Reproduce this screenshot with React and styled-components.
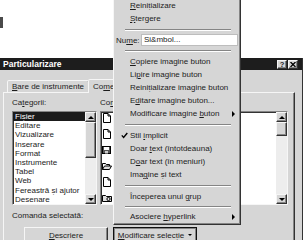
import styled, { createGlobalStyle } from "styled-components";

const FACE = "#d6d6d6";
const HILITE = "#f6f6f6";
const SHADOW = "#858585";
const DARK = "#333333";

const GlobalStyle = createGlobalStyle`
  html, body {
    margin: 0;
    padding: 0;
    background: #ffffff;
  }
  body {
    font-family: "Liberation Sans", Arial, sans-serif;
    font-size: 8px;
    color: #1c1c1c;
  }
`;

const raised = `
  border: 1px solid;
  border-color: ${HILITE} ${DARK} ${DARK} ${HILITE};
  box-shadow: inset -1px -1px ${SHADOW};
`;

const sunken = `
  border: 1px solid;
  border-color: ${SHADOW} ${HILITE} ${HILITE} ${SHADOW};
  box-shadow: inset 1px 1px ${DARK};
`;

const Screen = styled.div`
  position: relative;
  width: 304px;
  height: 240px;
  overflow: hidden;
  background: #fff;
`;

const Backdrop = styled.div`
  height: 58px;
  padding-top: 17px;
  box-sizing: border-box;
`;

const EdgeMark = styled.div`
  width: 3px;
  height: 11px;
  background: #4a4a4a;
`;

const Dialog = styled.div`
  width: 303px;
  height: 200px;
  box-sizing: border-box;
  background: ${FACE};
  border-right: 1px solid ${DARK};
`;

const TitleBar = styled.div`
  height: 12px;
  display: flex;
  align-items: center;
  justify-content: space-between;
  padding: 0 4px 0 3px;
  background: #1d1d1d;
`;

const Title = styled.span`
  color: #fff;
  font-weight: bold;
  font-size: 8.5px;
  line-height: 12px;
`;

const TitleButtons = styled.div`
  display: flex;
  gap: 1px;
`;

const TitleButton = styled.div`
  width: 10px;
  height: 9px;
  box-sizing: border-box;
  ${raised}
  background: ${FACE};
  display: flex;
  align-items: center;
  justify-content: center;
  font-weight: bold;
  font-size: 7.5px;
  line-height: 7px;
`;

const Body = styled.div`
  padding: 10px 0 0 3px;
`;

const TabStrip = styled.div`
  display: flex;
  align-items: flex-end;
  height: 12px;
  padding-left: 4px;
`;

const Tab = styled.div`
  position: relative;
  box-sizing: border-box;
  height: ${(p) => (p.$active ? "14px" : "12px")};
  margin-bottom: ${(p) => (p.$active ? "-1px" : "0")};
  margin-left: ${(p) => (p.$active ? "-1px" : "0")};
  padding: 0 4px;
  display: flex;
  align-items: center;
  background: ${FACE};
  border: 1px solid;
  border-bottom: none;
  border-color: ${HILITE} ${DARK} transparent ${HILITE};
  border-radius: 2px 2px 0 0;
  z-index: ${(p) => (p.$active ? 1 : 0)};
`;

const Panel = styled.div`
  width: 292px;
  height: 170px;
  box-sizing: border-box;
  ${raised}
  padding: 5px 6px 0 8px;
`;

const Columns = styled.div`
  display: grid;
  grid-template-columns: 85px 188px;
  column-gap: 3px;
`;

const Field = styled.div`
  display: flex;
  flex-direction: column;
  gap: 4px;
`;

const FieldLabel = styled.div`
  height: 9px;
  line-height: 9px;
  white-space: nowrap;
`;

const ListBox = styled.div`
  height: 94px;
  box-sizing: border-box;
  ${sunken}
  background: #fff;
  display: flex;
`;

const ListItems = styled.div`
  flex: 1;
  min-width: 0;
  overflow: hidden;
`;

const CategoryRow = styled.div`
  height: 9.2px;
  line-height: 9.2px;
  padding-left: 2px;
  white-space: nowrap;
  background: ${(p) => (p.$selected ? "#1b1b1b" : "transparent")};
  color: ${(p) => (p.$selected ? "#fff" : "inherit")};
`;

const CommandRow = styled.div`
  height: 16px;
  display: flex;
  align-items: flex-start;
  padding: 1px 0 0 1px;
  box-sizing: border-box;
`;

const ScrollBar = styled.div`
  width: 11px;
  display: flex;
  flex-direction: column;
  background: #ededed;
`;

const ScrollButton = styled.div`
  height: ${(p) => p.$h}px;
  box-sizing: border-box;
  ${raised}
  background: ${FACE};
  display: flex;
  align-items: center;
  justify-content: center;
`;

const Arrow = styled.span`
  width: 0;
  height: 0;
  border-left: 3px solid transparent;
  border-right: 3px solid transparent;
  border-${(p) => (p.$down ? "top" : "bottom")}: 3px solid #000;
`;

const ScrollGap = styled.div`
  flex: 1;
`;

const Caption = styled.div`
  margin-top: 6px;
  height: 9px;
  line-height: 9px;
`;

const ButtonRow = styled.div`
  display: flex;
  gap: 5px;
  margin-top: 7px;
  padding-left: 12px;
`;

const PushButton = styled.div`
  width: 84px;
  height: 16px;
  box-sizing: border-box;
  background: ${FACE};
  display: flex;
  align-items: center;
  justify-content: center;
  gap: 4px;
  ${(p) =>
    p.$pressed
      ? `border: 1px solid #111; box-shadow: inset 1px 1px ${SHADOW}, inset -1px -1px ${SHADOW};`
      : raised}
`;

const SmallDown = styled.span`
  width: 0;
  height: 0;
  border-left: 2px solid transparent;
  border-right: 2px solid transparent;
  border-top: 2px solid #000;
`;

const Key = styled.span`
  text-decoration: underline;
  text-underline-offset: 1px;
`;

/* context menu, dropped from "Modificare selecție" */
const Menu = styled.div`
  position: absolute;
  left: 113px;
  top: -4px;
  width: 128px;
  box-sizing: border-box;
  background: ${FACE};
  border: 1px solid;
  border-color: ${HILITE} ${DARK} ${DARK} ${HILITE};
  box-shadow: inset -1px -1px ${SHADOW};
  padding: 2px 2px 1px 2px;
  z-index: 5;
`;

const MenuItem = styled.div`
  position: relative;
  height: 13px;
  display: flex;
  align-items: center;
  padding: 0 3px 0 14px;
  white-space: nowrap;
`;

const Check = styled.svg`
  position: absolute;
  left: 5px;
  top: 3px;
`;

const SubArrow = styled.span`
  margin-left: auto;
  width: 0;
  height: 0;
  border-top: 3px solid transparent;
  border-bottom: 3px solid transparent;
  border-left: 3px solid #000;
`;

const Separator = styled.div`
  height: ${(p) => p.$h || 9}px;
  display: flex;
  align-items: center;
  padding: 0 7px 0 9px;
  &::after {
    content: "";
    flex: 1;
    border-top: 1px solid ${SHADOW};
    border-bottom: 1px solid #fff;
  }
`;

const NameRow = styled.div`
  height: 12px;
  display: flex;
  align-items: center;
`;

const NameLabel = styled.span`
  width: 25px;
`;

const NameInput = styled.div`
  flex: 1;
  height: 12px;
  box-sizing: border-box;
  background: #fff;
  border: 1px solid #bdbdbd;
  padding-left: 2px;
  line-height: 10px;
  white-space: nowrap;
`;

function Mnemonic({ text, at }) {
  if (at == null) return text;
  return (
    <>
      {text.slice(0, at)}
      <Key>{text[at]}</Key>
      {text.slice(at + 1)}
    </>
  );
}

function CommandIcon({ kind }) {
  if (kind === "page") {
    return (
      <svg width="10" height="10" viewBox="0 0 10 10">
        <path d="M1.5 0.5H6L8.5 3V9.5H1.5Z" fill="#fff" stroke="#000" />
        <path d="M6 0.5V3H8.5" fill="none" stroke="#000" />
      </svg>
    );
  }
  if (kind === "open") {
    return (
      <svg width="10" height="10" viewBox="0 0 10 10">
        <path d="M0.5 2.5H3.5L4.5 3.5H7.5V5" fill="#bbb" stroke="#000" />
        <path d="M0.5 2.5V8.5H7.5L9.5 5H2.5L0.5 8.5" fill="#ddd" stroke="#000" />
      </svg>
    );
  }
  if (kind === "disk") {
    return (
      <svg width="10" height="10" viewBox="0 0 10 10">
        <rect x="0.5" y="1.5" width="8" height="7" fill="#555" stroke="#000" />
        <rect x="2" y="2" width="5" height="3" fill="#fff" />
        <rect x="3" y="6" width="3" height="2.5" fill="#ccc" />
      </svg>
    );
  }
  return (
    <svg width="10" height="10" viewBox="0 0 10 10">
      <path d="M0.5 2.5H3.5L4.5 3.5H9.5V8.5H0.5Z" fill="#e2e2e2" stroke="#000" />
      <circle cx="6.5" cy="6" r="1.6" fill="none" stroke="#000" />
    </svg>
  );
}

const categories = [
  "Fișier",
  "Editare",
  "Vizualizare",
  "Inserare",
  "Format",
  "Instrumente",
  "Tabel",
  "Web",
  "Fereastră și ajutor",
  "Desenare",
];

// only the icon column of the command list shows beside the menu
const commandIcons = ["page", "page", "disk", "open", "page", "web"];

const menu = [
  { text: "Reinițializare", at: 0 },
  { text: "Ștergere", at: 0 },
  { sep: true },
  { name: true },
  { sep: true },
  { text: "Copiere imagine buton", at: 0 },
  { text: "Lipire imagine buton", at: 2 },
  { text: "Reinițializare imagine buton", at: 5 },
  { text: "Editare imagine buton...", at: 1 },
  { text: "Modificare imagine buton", at: 19, sub: true },
  { sep: true },
  { text: "Stil implicit", at: 5, checked: true },
  { text: "Doar text (întotdeauna)", at: 5 },
  { text: "Doar text (în meniuri)", at: 1 },
  { text: "Imagine și text", at: 3 },
  { sep: true },
  { text: "Începerea unui grup", at: 15 },
  { sep: true, h: 7 },
  { text: "Asociere hyperlink", at: 9, sub: true },
];

function ScrollColumn({ thumbHeight }) {
  return (
    <ScrollBar>
      <ScrollButton $h={10}>
        <Arrow />
      </ScrollButton>
      <ScrollButton $h={thumbHeight} />
      <ScrollGap />
      <ScrollButton $h={10}>
        <Arrow $down />
      </ScrollButton>
    </ScrollBar>
  );
}

function ContextMenu() {
  return (
    <Menu>
      {menu.map((m, i) => {
        if (m.sep) return <Separator key={i} $h={m.h} />;
        if (m.name)
          return (
            <NameRow key={i}>
              <NameLabel>
                <Mnemonic text="Nume:" at={2} />
              </NameLabel>
              <NameInput>Si&amp;mbol...</NameInput>
            </NameRow>
          );
        return (
          <MenuItem key={i}>
            {m.checked && (
              <Check width="7" height="7" viewBox="0 0 7 7">
                <path d="M0.8 3.4L2.6 5.4L6.3 1" fill="none" stroke="#000" strokeWidth="1.4" />
              </Check>
            )}
            <span>
              <Mnemonic text={m.text} at={m.at} />
            </span>
            {m.sub && <SubArrow />}
          </MenuItem>
        );
      })}
    </Menu>
  );
}

export default function App() {
  return (
    <Screen>
      <GlobalStyle />
      <Backdrop>
        <EdgeMark />
      </Backdrop>
      <Dialog>
        <TitleBar>
          <Title>Particularizare</Title>
          <TitleButtons>
            <TitleButton>?</TitleButton>
            <TitleButton>
              <svg width="6" height="5" viewBox="0 0 6 5">
                <path d="M0.5 0L5.5 5M5.5 0L0.5 5" stroke="#000" strokeWidth="1.3" />
              </svg>
            </TitleButton>
          </TitleButtons>
        </TitleBar>
        <Body>
          <TabStrip>
            <Tab>
              <Mnemonic text="Bare de instrumente" at={0} />
            </Tab>
            <Tab $active>
              <Mnemonic text="Comenzi" at={2} />
            </Tab>
          </TabStrip>
          <Panel>
            <Columns>
              <Field>
                <FieldLabel>
                  <Mnemonic text="Categorii:" at={2} />
                </FieldLabel>
                <ListBox>
                  <ListItems>
                    {categories.map((c, i) => (
                      <CategoryRow key={c} $selected={i === 0}>
                        {c}
                      </CategoryRow>
                    ))}
                  </ListItems>
                  <ScrollColumn thumbHeight={36} />
                </ListBox>
              </Field>
              <Field>
                <FieldLabel>
                  <Mnemonic text="Comenzi:" at={2} />
                </FieldLabel>
                <ListBox>
                  <ListItems>
                    {commandIcons.map((kind, i) => (
                      <CommandRow key={i}>
                        <CommandIcon kind={kind} />
                      </CommandRow>
                    ))}
                  </ListItems>
                  <ScrollColumn thumbHeight={14} />
                </ListBox>
              </Field>
            </Columns>
            <Caption>Comanda selectată:</Caption>
            <ButtonRow>
              <PushButton>
                <span>
                  <Mnemonic text="Descriere" at={0} />
                </span>
              </PushButton>
              <PushButton $pressed>
                <span>
                  <Mnemonic text="Modificare selecție" at={0} />
                </span>
                <SmallDown />
              </PushButton>
            </ButtonRow>
          </Panel>
        </Body>
      </Dialog>
      <ContextMenu />
    </Screen>
  );
}
